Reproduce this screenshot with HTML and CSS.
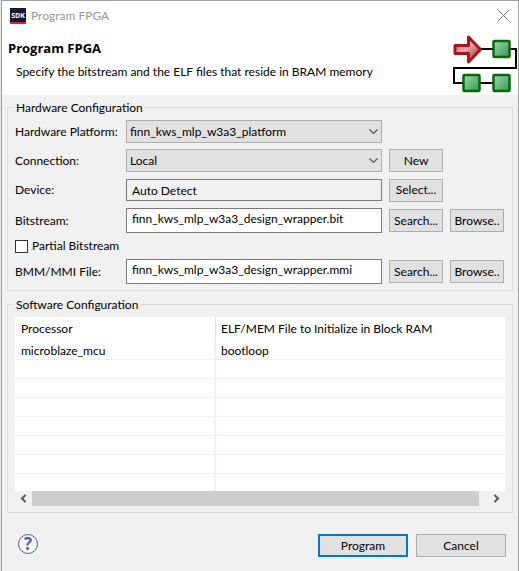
FILE: index.html
```html
<!DOCTYPE html>
<html lang="en">
<head>
<meta charset="utf-8">
<title>Program FPGA</title>
<link rel="stylesheet" href="styles.css">
</head>
<body>
<main class="dialog">
  <header class="head">
    <div class="titlebar">
      <svg class="app-icon" width="16" height="16" viewBox="0 0 16 16" aria-hidden="true">
        <rect width="16" height="16" fill="#161a30"/>
        <rect y="14" width="16" height="2" fill="#e8202a"/>
        <text x="8" y="10" text-anchor="middle" class="app-icon-text">SDK</text>
      </svg>
      <span class="window-title">Program FPGA</span>
      <button class="close" type="button" aria-label="Close">
        <svg width="11" height="11" viewBox="0 0 11 11"><path d="M.5 .5l10 10M10.500 .5l-10 10" stroke="#777" fill="none"/></svg>
      </button>
    </div>
    <div class="banner">
      <div class="intro">
        <h1>Program FPGA</h1>
        <p>Specify the bitstream and the ELF files that reside in BRAM memory</p>
      </div>
      <svg class="chain" width="66" height="60" viewBox="0 0 66 60" aria-hidden="true">
        <defs>
          <linearGradient id="red" x1="0" y1="0" x2="1" y2="1"><stop offset="0" stop-color="#c8555a"/><stop offset=".45" stop-color="#e3aaac"/><stop offset="1" stop-color="#b51a20"/></linearGradient>
          <linearGradient id="green" x1="0" y1="0" x2="1" y2="1"><stop offset="0" stop-color="#a5d6b5"/><stop offset="1" stop-color="#2f9a52"/></linearGradient>
        </defs>
        <path d="M28 15H63V34H1V49H50" fill="none" stroke="#000" stroke-width="2"/>
        <path d="M2 11.500H15.500V3L27.500 15.500L15.500 28V19.500H2Z" fill="url(#red)" stroke="#ab161c" stroke-width="3" stroke-linejoin="round"/>
        <g fill="url(#green)" stroke="#056a05" stroke-width="2.500">
          <rect x="40.500" y="7" width="16" height="16" rx="1"/>
          <rect x="10.500" y="41" width="16" height="16" rx="1"/>
          <rect x="40.500" y="41" width="16" height="16" rx="1"/>
        </g>
      </svg>
    </div>
  </header>

  <form class="content">
    <fieldset class="group">
      <legend>Hardware Configuration</legend>
      <div class="fields">
        <label for="platform">Hardware Platform:</label>
        <div class="combo">
          <select id="platform"><option>finn_kws_mlp_w3a3_platform</option></select>
          <svg width="9" height="6" viewBox="0 0 9 6" aria-hidden="true"><path d="M.5 .5l4 4l4-4" fill="none" stroke="#555" stroke-width="1.200"/></svg>
        </div>

        <label class="first" for="connection">Connection:</label>
        <div class="combo">
          <select id="connection"><option>Local</option></select>
          <svg width="9" height="6" viewBox="0 0 9 6" aria-hidden="true"><path d="M.5 .5l4 4l4-4" fill="none" stroke="#555" stroke-width="1.200"/></svg>
        </div>
        <button type="button">New</button>

        <label class="first" for="device">Device:</label>
        <input class="readonly" id="device" type="text" value="Auto Detect" readonly>
        <button type="button">Select...</button>

        <label class="first" for="bitstream">Bitstream:</label>
        <input id="bitstream" type="text" value="finn_kws_mlp_w3a3_design_wrapper.bit">
        <button type="button">Search...</button>
        <button type="button">Browse..</button>

        <label class="check"><input type="checkbox">Partial Bitstream</label>

        <label class="first" for="bmm">BMM/MMI File:</label>
        <input id="bmm" type="text" value="finn_kws_mlp_w3a3_design_wrapper.mmi">
        <button type="button">Search...</button>
        <button type="button">Browse..</button>
      </div>
    </fieldset>

    <fieldset class="group">
      <legend>Software Configuration</legend>
      <div class="table-view">
        <table>
          <thead><tr><th>Processor</th><th>ELF/MEM File to Initialize in Block RAM</th></tr></thead>
          <tbody>
            <tr><td>microblaze_mcu</td><td>bootloop</td></tr>
            <tr><td></td><td></td></tr>
            <tr><td></td><td></td></tr>
            <tr><td></td><td></td></tr>
            <tr><td></td><td></td></tr>
            <tr><td></td><td></td></tr>
            <tr><td></td><td></td></tr>
            <tr class="last"><td></td><td></td></tr>
          </tbody>
        </table>
        <div class="scrollbar" aria-hidden="true">
          <svg width="17" height="15" viewBox="0 0 17 15"><path d="M10.500 4L7 7.500L10.500 11" fill="none" stroke="#555" stroke-width="2"/></svg>
          <div class="track"><div class="thumb"></div></div>
          <svg width="17" height="15" viewBox="0 0 17 15"><path d="M6.500 4L10 7.500L6.500 11" fill="none" stroke="#555" stroke-width="2"/></svg>
        </div>
      </div>
    </fieldset>

    <footer class="actions">
      <button class="help" type="button" aria-label="Help">?</button>
      <button class="wide primary" type="submit">Program</button>
      <button class="wide" type="button">Cancel</button>
    </footer>
  </form>
</main>
</body>
</html>
```
FILE: styles.css
```css
* {
  box-sizing: border-box;
}

body {
  margin: 0;
  padding-left: 1px;
  background: #e4e4e4;
  color: #000;
  font: 12px/16px Lato, "Open Sans", sans-serif;
}

.dialog {
  min-height: 100vh;
  border: 1px solid #a0a0a0;
  border-bottom: 0;
  background: #f0f0f0;
}

.head {
  background: #fff;
}

.titlebar {
  display: flex;
  align-items: center;
  gap: 5px;
  height: 29px;
  padding: 0 9px 0 8px;
}

.app-icon-text {
  fill: #fff;
  font: bold 7px "Open Sans", sans-serif;
}

.window-title {
  flex: 1;
  color: #999;
}

.close {
  display: flex;
  width: 11px;
  padding: 0;
  border: 0;
  background: none;
}

.banner {
  display: flex;
  justify-content: space-between;
  height: 65px;
  padding-left: 6px;
}

.intro {
  flex: 1;
  white-space: nowrap;
}

h1 {
  margin: 10px 0 8px;
  font: bold 13px/16px "Open Sans", sans-serif;
}

p {
  margin: 0 0 0 8px;
}

.chain {
  margin: 4px -1px 0 0;
}

.content {
  padding: 5px 5px 0;
}

.group {
  min-width: 0;
  margin: 0 0 6px;
  padding: 5px 7px 6px;
  border: 1px solid #dcdcdc;
}

legend {
  margin-left: -1px;
  padding: 0 2px;
  line-height: 15px;
}

.fields {
  display: grid;
  grid-template-columns: 104px minmax(0, 1fr) 54px 54px;
  grid-template-rows: 23px 23px 24px 25px 14px 25px;
  gap: 6px 7px;
  align-items: center;
  padding-right: 1px;
}

.fields label {
  white-space: nowrap;
}

.first {
  grid-column: 1;
}

.check {
  display: flex;
  grid-column: 1 / -1;
  align-items: center;
  gap: 4px;
}

.check input {
  appearance: none;
  width: 13px;
  height: 13px;
  margin: 0;
  border: 1px solid #333;
  background: #fff;
}

button,
select,
input[type="text"] {
  color: inherit;
  font: inherit;
}

input[type="text"] {
  width: 100%;
  height: 25px;
  padding: 0 5px 4px;
  border: 1px solid #7a7a7a;
  background: #fff;
}

.fields .readonly {
  height: 22px;
  padding-bottom: 0;
  background: #f0f0f0;
}

.combo {
  display: grid;
  align-items: center;
}

.combo > * {
  grid-area: 1 / 1;
}

.combo svg {
  justify-self: end;
  margin-right: 4px;
  pointer-events: none;
}

select {
  appearance: none;
  width: 100%;
  height: 23px;
  padding: 0 3px;
  border: 1px solid #adadad;
  border-radius: 0;
  background: #e1e1e1;
}

.fields button,
.wide {
  height: 23px;
  padding: 0;
  border: 1px solid #adadad;
  background: #e1e1e1;
  white-space: nowrap;
}

table {
  width: 100%;
  border-collapse: separate;
  border-spacing: 0;
  table-layout: fixed;
  background: #fff;
}

th,
td {
  height: 19px;
  padding: 0 6px;
  border-bottom: 1px solid #f0f0f0;
  line-height: 16px;
  text-align: left;
}

td {
  padding-top: 2px;
}

th {
  height: 24px;
  border-bottom: 0;
  font-weight: normal;
}

th:first-child {
  width: 201px;
  border-right: 1px solid #e0e0e0;
}

th:last-child,
td:last-child {
  padding-left: 5px;
}

td:first-child {
  border-right: 2px solid #edf2fb;
}

.last td {
  height: 17px;
  border-bottom: 0;
}

.scrollbar {
  display: flex;
  height: 15px;
}

.track {
  flex: 1;
}

.thumb {
  width: 98%;
  height: 100%;
  background: #cdcdcd;
}

.actions {
  display: flex;
  align-items: flex-start;
  gap: 8px;
  padding: 15px 7px 14px 11px;
}

.help {
  width: 20px;
  height: 20px;
  margin-right: auto;
  padding: 0;
  border: 1px solid #4f6488;
  border-radius: 50%;
  background: #f4f6fa;
  color: #4f6488;
  font: bold 17px/18px "Open Sans", sans-serif;
}

.wide {
  width: 90px;
}

.primary {
  border: 2px solid #0078d7;
}
```
